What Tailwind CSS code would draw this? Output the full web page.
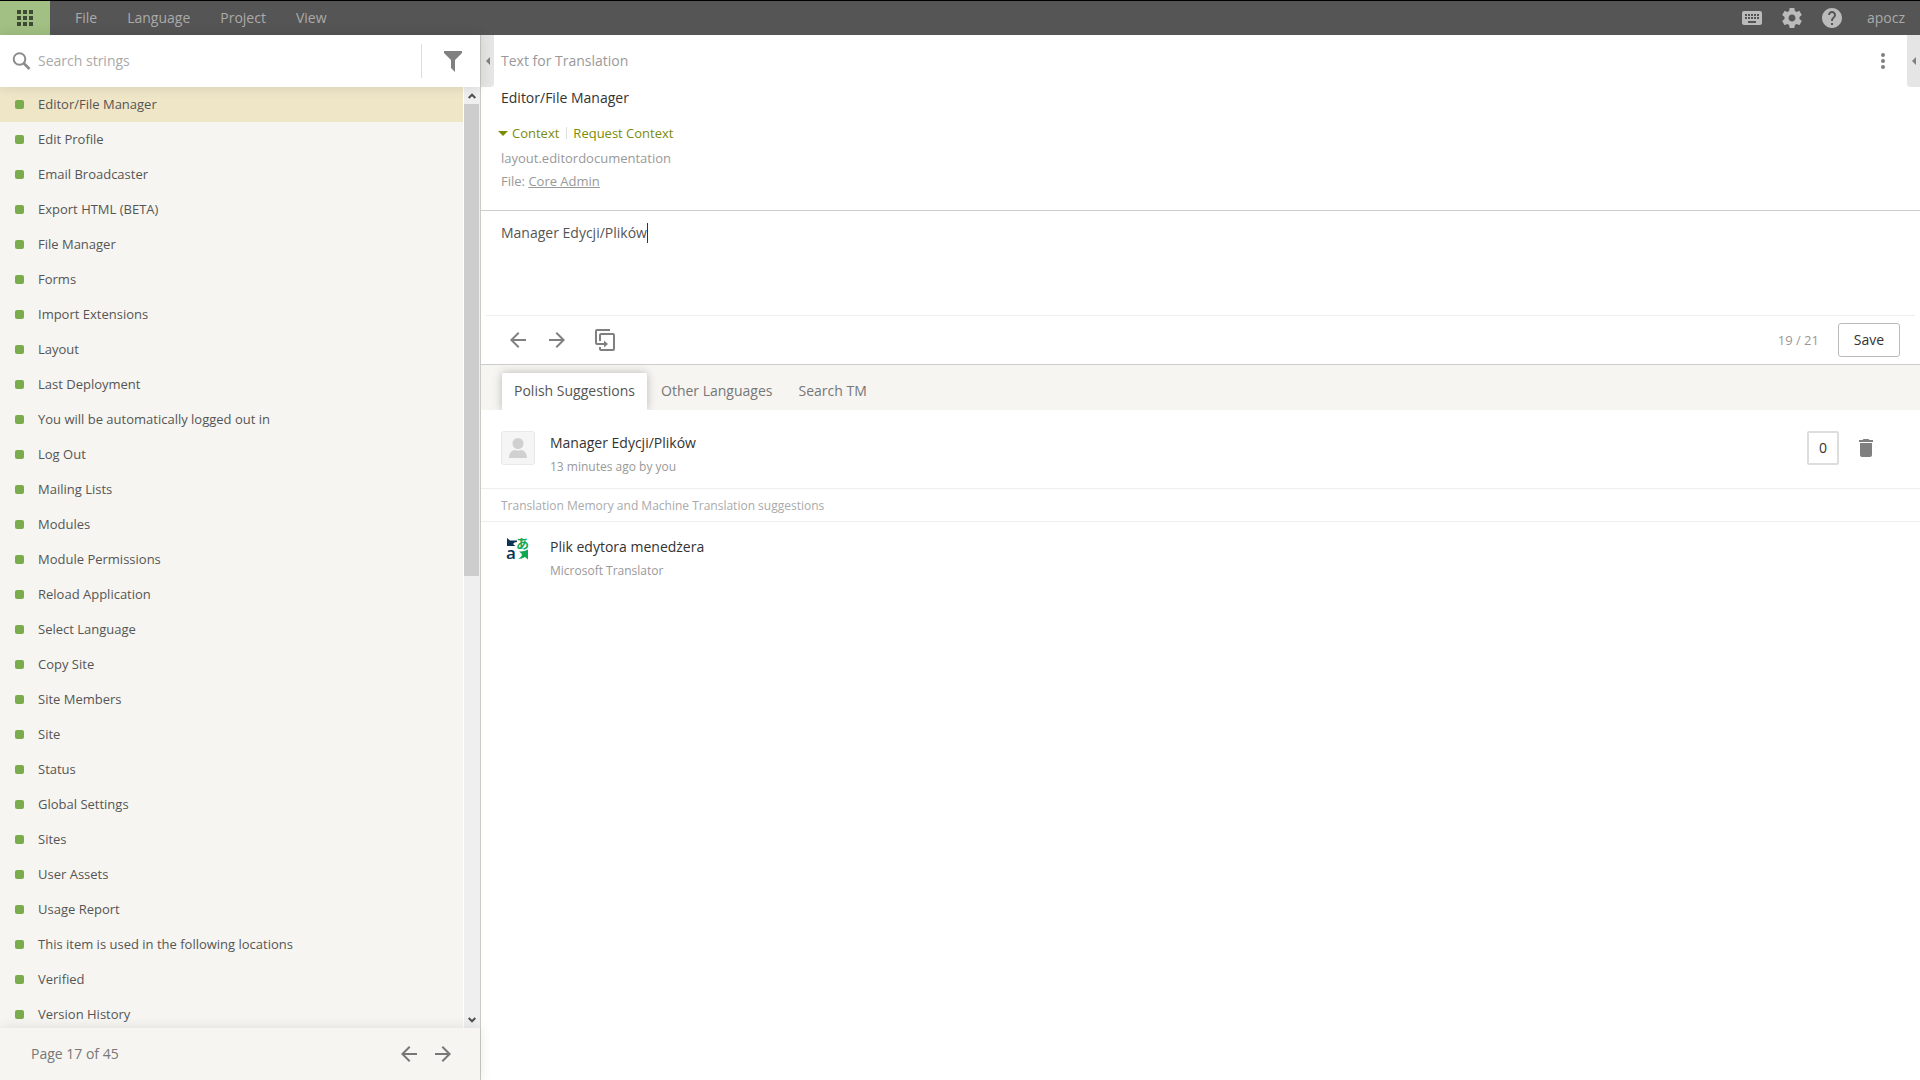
<!DOCTYPE html>
<html lang="en">
<head>
  <meta charset="UTF-8">
  <meta name="viewport" content="width=device-width, initial-scale=1.0">
  <title>Translation Editor</title>
  <script src="https://cdn.jsdelivr.net/npm/@tailwindcss/browser@4"></script>
</head>
<body class="h-screen flex flex-col overflow-hidden bg-white font-['Open_Sans',sans-serif] text-sm text-[#555]">
  <!-- Top bar -->
  <header class="flex shrink-0 h-[35px] border-t border-black bg-[#555] text-[#aaa]">
    <button type="button" aria-label="Home" class="w-[50px] flex items-center justify-center bg-[#a2c083]">
      <svg class="size-4" viewBox="0 0 16 16" fill="#3f4a34" shape-rendering="crispEdges">
        <path d="M0 0h4v4H0zM6 0h4v4H6zM12 0h4v4h-4zM0 6h4v4H0zM6 6h4v4H6zM12 6h4v4h-4zM0 12h4v4H0zM6 12h4v4H6zM12 12h4v4h-4z"/>
      </svg>
    </button>
    <nav class="flex items-center pl-[10px]">
      <a href="#" class="px-[15px]">File</a>
      <a href="#" class="px-[15px]">Language</a>
      <a href="#" class="px-[15px]">Project</a>
      <a href="#" class="px-[15px]">View</a>
    </nav>
    <div class="ml-auto flex items-center gap-4 pr-[15px]">
      <button type="button" aria-label="Keyboard shortcuts">
        <svg class="size-6" viewBox="0 0 24 24" fill="#bbb"><path d="M20 5H4c-1.100 0-1.990.9-1.990 2L2 17c0 1.100.9 2 2 2h16c1.100 0 2-.9 2-2V7c0-1.100-.9-2-2-2zm-9 3h2v2h-2V8zm0 3h2v2h-2v-2zM8 8h2v2H8V8zm0 3h2v2H8v-2zm-1 2H5v-2h2v2zm0-3H5V8h2v2zm9 7H8v-2h8v2zm0-4h-2v-2h2v2zm0-3h-2V8h2v2zm3 3h-2v-2h2v2zm0-3h-2V8h2v2z"/></svg>
      </button>
      <button type="button" aria-label="Settings">
        <svg class="size-6" viewBox="0 0 24 24" fill="#bbb"><path d="M19.430 12.980c.04-.32.070-.64.070-.98s-.03-.66-.07-.98l2.110-1.650c.19-.15.240-.42.120-.64l-2-3.460c-.12-.22-.39-.3-.61-.22l-2.490 1c-.52-.4-1.080-.73-1.690-.98l-.38-2.650C14.460 2.180 14.250 2 14 2h-4c-.25 0-.46.180-.49.420l-.38 2.650c-.61.250-1.170.590-1.690.980l-2.490-1c-.23-.09-.49 0-.61.220l-2 3.460c-.13.220-.07.490.120.640l2.110 1.650c-.04.320-.07.650-.07.980s.03.660.070.980l-2.110 1.650c-.19.150-.24.420-.12.640l2 3.460c.12.220.390.300.610.220l2.490-1c.52.400 1.080.730 1.690.980l.38 2.650c.03.240.240.420.490.420h4c.25 0 .46-.18.490-.42l.38-2.650c.61-.25 1.170-.59 1.690-.98l2.490 1c.23.090.490 0 .61-.22l2-3.460c.12-.22.070-.49-.12-.64l-2.110-1.650zM12 15.500c-1.930 0-3.500-1.570-3.500-3.500s1.570-3.500 3.500-3.500 3.500 1.570 3.500 3.500-1.570 3.500-3.500 3.500z"/></svg>
      </button>
      <button type="button" aria-label="Help">
        <svg class="size-6" viewBox="0 0 24 24" fill="#bbb"><path d="M12 2C6.480 2 2 6.480 2 12s4.480 10 10 10 10-4.480 10-10S17.520 2 12 2zm1 17h-2v-2h2v2zm2.070-7.750l-.9.920C13.450 12.900 13 13.500 13 15h-2v-.5c0-1.100.450-2.100 1.170-2.830l1.240-1.260c.37-.36.590-.86.590-1.410 0-1.100-.9-2-2-2s-2 .9-2 2H8c0-2.210 1.790-4 4-4s4 1.790 4 4c0 .880-.36 1.680-.93 2.250z"/></svg>
      </button>
      <a href="#" class="pl-[7px]">apocz</a>
    </div>
  </header>

  <div class="flex flex-1 min-h-0">
    <!-- Strings sidebar -->
    <aside class="w-[481px] shrink-0 flex flex-col border-r border-[#cbcbc5] bg-[#f6f5f1]">
      <div class="relative z-10 flex items-center shrink-0 h-[52px] bg-white pl-3 shadow-[0_0_12px_rgba(0,0,0,0.12)]">
        <svg class="size-[19px] shrink-0" viewBox="0 0 19 19" fill="none" stroke="#8c8c8c"><circle cx="7.500" cy="7" r="5.800" stroke-width="2"/><path d="M11.500 11l6 6" stroke-width="2.600"/></svg>
        <input type="text" aria-label="Search strings" placeholder="Search strings" class="flex-1 min-w-0 pl-[7px] outline-none placeholder:text-[#a9a9a9]">
        <button type="button" aria-label="Filter" class="w-[59px] h-[34px] flex items-center justify-center border-l border-[#ddd] pl-1">
          <svg class="w-[18px] h-[21px]" viewBox="0 0 18 21" fill="#808080"><path d="M0 0h18v2l-7 7v12l-4-4V9L0 2z"/></svg>
        </button>
      </div>

      <div class="flex flex-1 min-h-0">
        <ul id="stringList" class="flex-1 overflow-hidden text-[13px]"></ul>
        <div class="w-[17px] shrink-0 flex flex-col border-l border-white bg-[#efefef]">
          <div class="h-[17px] shrink-0 flex items-center justify-center">
            <svg class="w-2 h-[6px]" viewBox="0 0 8 6" fill="none" stroke="#505050" stroke-width="2"><path d="M.7 5L4 1.700 7.300 5"/></svg>
          </div>
          <div class="flex-1 pr-px"><div class="h-[52%] bg-[#cdcdcd]"></div></div>
          <div class="h-[17px] shrink-0 flex items-center justify-center">
            <svg class="w-2 h-[6px]" viewBox="0 0 8 6" fill="none" stroke="#505050" stroke-width="2"><path d="M.7 1L4 4.300 7.300 1"/></svg>
          </div>
        </div>
      </div>

      <div class="relative z-10 flex items-center shrink-0 h-[52px] bg-[#f6f5f1] pl-[31px] pr-[25px] text-[#777] shadow-[0_0_12px_rgba(0,0,0,0.10)]">
        <span>Page 17 of 45</span>
        <button type="button" aria-label="Previous page" class="ml-auto">
          <svg class="size-6" viewBox="0 0 24 24" fill="#777"><path d="M20 11H7.830l5.590-5.590L12 4l-8 8 8 8 1.410-1.410L7.830 13H20v-2z"/></svg>
        </button>
        <button type="button" aria-label="Next page" class="ml-[10px]">
          <svg class="size-6" viewBox="0 0 24 24" fill="#777"><path d="M12 4l-1.410 1.410L16.170 11H4v2h12.170l-5.580 5.590L12 20l8-8z"/></svg>
        </button>
      </div>
    </aside>

    <!-- Editor -->
    <main class="relative flex-1 min-w-0">
      <button type="button" aria-label="Collapse left panel" class="absolute left-0 top-0 w-[13px] h-[52px] flex items-center justify-center rounded-br-[4px] bg-[#e5e5e5]">
        <svg class="w-1 h-2" viewBox="0 0 4 8" fill="#808080"><path d="M4 0v8L0 4z"/></svg>
      </button>
      <button type="button" aria-label="Expand right panel" class="absolute right-0 top-0 w-[13px] h-[52px] flex items-center justify-center rounded-bl-[4px] bg-[#e5e5e5]">
        <svg class="w-1 h-2" viewBox="0 0 4 8" fill="#808080"><path d="M4 0v8L0 4z"/></svg>
      </button>

      <section class="h-[176px] border-b border-[#ccc] pl-5 pr-[25px]">
        <div class="flex items-center justify-between h-[52px] text-[#999]">
          <h2>Text for Translation</h2>
          <button type="button" aria-label="More">
            <svg class="size-6" viewBox="0 0 24 24" fill="#808080"><circle cx="12" cy="6" r="2"/><circle cx="12" cy="12" r="2"/><circle cx="12" cy="18" r="2"/></svg>
          </button>
        </div>
        <p class="leading-[22px] text-[#333]">Editor/File Manager</p>
        <div class="flex items-center mt-[14px] h-5 text-[13px] text-[#7c8c07]">
          <button type="button" class="flex items-center -ml-[3px] gap-1">
            <svg class="w-[10px] h-[5px]" viewBox="0 0 10 5" fill="currentColor"><path d="M0 0h10L5 5z"/></svg>
            Context
          </button>
          <span class="w-px h-3 ml-[7px] mr-[6px] bg-[#ddd]"></span>
          <a href="#">Request Context</a>
        </div>
        <p class="mt-[3px] text-[13px] leading-6 text-[#999]">layout.editordocumentation</p>
        <p class="text-[13px] leading-[22px] text-[#999]">File: <a href="#" class="underline">Core Admin</a></p>
      </section>

      <section class="border-b border-[#ccc]">
        <div class="relative h-[105px] mx-[5px] border-b border-[#eee]">
          <textarea aria-label="Translation" class="block w-full h-full resize-none px-[15px] pt-3 leading-5 text-[#555] outline-none">Manager Edycji/Plików</textarea>
          <span class="absolute left-[161px] top-3 w-px h-5 bg-[#333]"></span>
        </div>
        <div class="flex items-center h-12 pl-[25px] pr-5">
          <button type="button" aria-label="Previous string">
            <svg class="size-6" viewBox="0 0 24 24" fill="#808080"><path d="M20 11H7.830l5.590-5.590L12 4l-8 8 8 8 1.410-1.410L7.830 13H20v-2z"/></svg>
          </button>
          <button type="button" aria-label="Next string" class="ml-[15px]">
            <svg class="size-6" viewBox="0 0 24 24" fill="#808080"><path d="M12 4l-1.410 1.410L16.170 11H4v2h12.170l-5.580 5.590L12 20l8-8z"/></svg>
          </button>
          <button type="button" aria-label="Copy source" class="ml-[26px]">
            <svg class="w-5 h-[22px]" viewBox="0 0 20 22" fill="none" stroke="#808080" stroke-width="2"><path d="M15 1H2Q1 1 1 2v12q0 1 1 1h9M5 12V6q0-1 1-1h12q1 0 1 1v14q0 1-1 1H6q-1 0-1-1v-2"/><path d="M9 11.500v7l4-3.500z" fill="#808080" stroke="none"/></svg>
          </button>
          <span class="ml-auto text-[13px] text-[#999]">19 / 21</span>
          <button type="button" class="ml-[19px] w-[62px] h-[34px] rounded-[3px] border border-[#bbb] text-[#333]">Save</button>
        </div>
      </section>

      <!-- Suggestions -->
      <div class="flex items-end h-[45px] overflow-hidden bg-[#f6f5f1] pl-[21px] text-[#777]">
        <button type="button" class="h-[37px] px-3 pb-[2px] rounded-t-[2px] bg-white text-[#555] shadow-[0_0_10px_rgba(0,0,0,0.25)]">Polish Suggestions</button>
        <button type="button" class="h-[37px] px-[14px] pb-[2px]">Other Languages</button>
        <button type="button" class="h-[37px] px-3 pb-[2px]">Search TM</button>
      </div>

      <article class="flex items-start h-[79px] border-b border-[#eee] pl-5 pr-[42px] pt-[21px]">
        <svg class="size-[34px] shrink-0" viewBox="0 0 34 34"><rect x=".5" y=".5" width="33" height="33" rx="2" fill="#f5f5f5" stroke="#e8e8e8"/><circle cx="17" cy="12.500" r="5.500" fill="#d0d0d0"/><path d="M8 27c0-5 3-8 6-8q3 1.500 6 0c3 0 6 3 6 8z" fill="#d0d0d0"/></svg>
        <div class="ml-[15px]">
          <p class="leading-6 text-[#333]">Manager Edycji/Plików</p>
          <p class="text-xs leading-6 text-[#999]">13 minutes ago by you</p>
        </div>
        <div class="ml-auto flex items-center gap-[15px]">
          <button type="button" class="w-8 h-[34px] rounded-[2px] border-2 border-[#ddd] text-[#333]">0</button>
          <button type="button" aria-label="Delete suggestion">
            <svg class="size-6" viewBox="0 0 24 24" fill="#808080"><path d="M6 19c0 1.100.9 2 2 2h8c1.100 0 2-.9 2-2V7H6v12zM19 4h-3.500l-1-1h-5l-1 1H5v2h14V4z"/></svg>
          </button>
        </div>
      </article>
      <h3 class="flex items-center h-[33px] border-b border-[#eee] pt-[2px] pl-5 text-xs text-[#aaa]">Translation Memory and Machine Translation suggestions</h3>
      <article class="flex items-start pl-5 pt-[13px]">
        <svg class="w-[34px] h-[26px] shrink-0" viewBox="0 0 34 26">
          <path d="M6 3l3 2.500h7v1.500q-3 0-4 2l2.500 2H6z" fill="#0b3453"/>
          <path d="M27 14.500v10l-3-2.500q-3 2-7 2 4-2 4-5l-3-2.500q5 .5 9-2z" fill="#0fa850"/>
          <text x="5" y="24" font-size="17" font-weight="600" fill="#0b3453" font-family="Open Sans, sans-serif">a</text>
          <text x="15" y="13" font-size="13" font-weight="700" fill="#0fa850" font-family="Noto Sans CJK JP, sans-serif">あ</text>
        </svg>
        <div class="ml-[15px]">
          <p class="leading-6 text-[#333]">Plik edytora menedżera</p>
          <p class="text-xs leading-6 text-[#999]">Microsoft Translator</p>
        </div>
      </article>
    </main>
  </div>

  <script>
    const strings = [
      'Editor/File Manager', 'Edit Profile', 'Email Broadcaster', 'Export HTML (BETA)', 'File Manager',
      'Forms', 'Import Extensions', 'Layout', 'Last Deployment', 'You will be automatically logged out in',
      'Log Out', 'Mailing Lists', 'Modules', 'Module Permissions', 'Reload Application', 'Select Language',
      'Copy Site', 'Site Members', 'Site', 'Status', 'Global Settings', 'Sites', 'User Assets',
      'Usage Report', 'This item is used in the following locations', 'Verified', 'Version History'
    ];

    document.getElementById('stringList').innerHTML = strings.map((s, i) => `
      <li>
        <a href="#" class="flex items-center h-[35px] pl-[15px] ${i === 0 ? 'bg-[#efe6c7]' : ''}">
          <span class="size-[9px] mr-[14px] rounded-[2px] bg-[#7aab4c]"></span>${s}
        </a>
      </li>`).join('');
  </script>
</body>
</html>
